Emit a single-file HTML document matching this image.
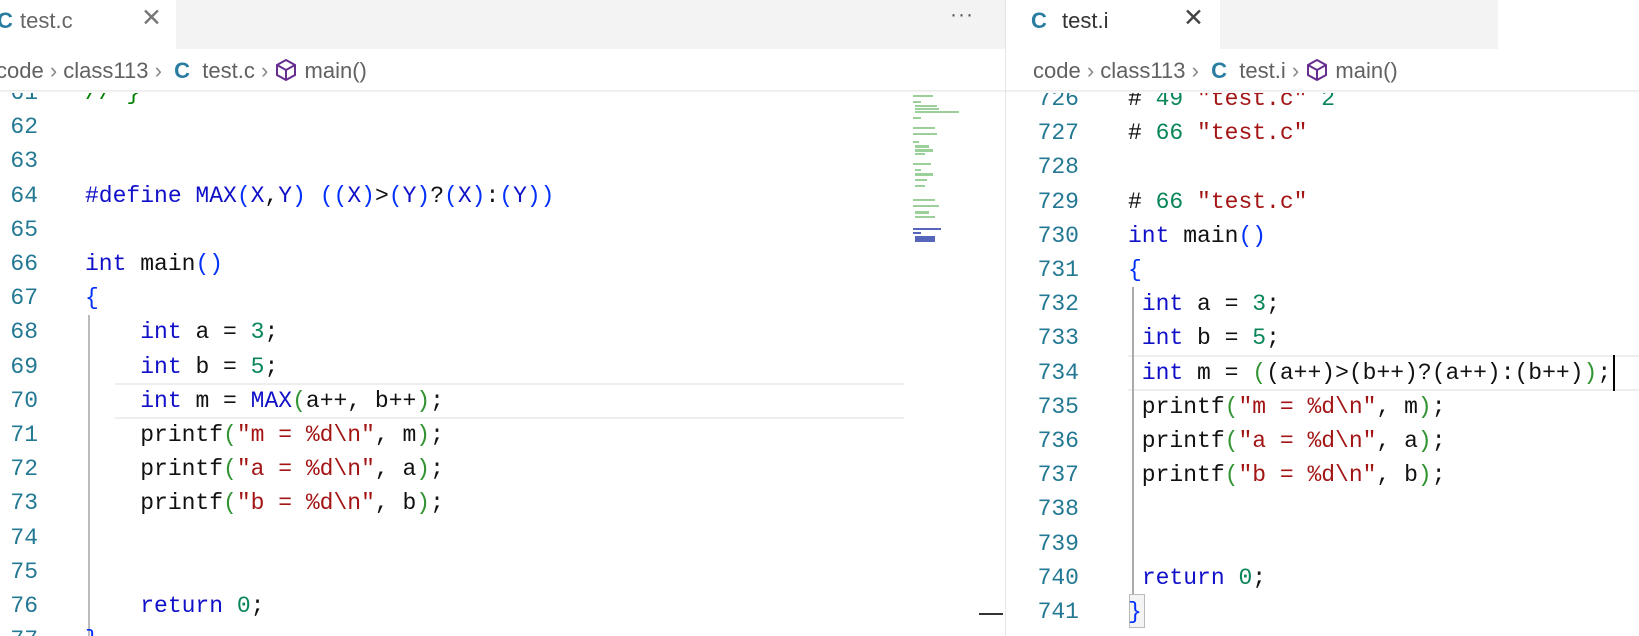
<!DOCTYPE html>
<html><head><meta charset="utf-8"><style>
body{margin:0;width:1639px;height:636px;overflow:hidden;background:#fff;position:relative;font-family:"Liberation Sans",sans-serif}
.abs{position:absolute}
.code{font-family:"Liberation Mono","DejaVu Sans Mono",monospace;font-size:23px;white-space:pre;color:#111;line-height:34.2px;height:34.2px}
.ln{font-family:"Liberation Mono",monospace;font-size:23px;color:#237893;text-align:right;line-height:34.2px;white-space:pre}
.k{color:#1010c8}.n{color:#098658}.s{color:#a31515}.g{color:#319331}.b{color:#0431fa}.c{color:#008000}
.ui{font-size:22px;color:#616161}
</style></head><body>
<!-- tab bars -->
<div class="abs" style="left:0;top:0;width:1005px;height:49px;background:#f3f3f3"></div>
<div class="abs" style="left:0;top:0;width:176px;height:49px;background:#fff"></div>
<div class="abs ui" style="left:-3px;top:8px;color:#2a7da0;font-weight:bold">C</div>
<div class="abs ui" style="left:20px;top:8px;color:#666">test.c</div>
<div class="abs" style="left:141px;top:3px;font-size:25px;color:#777">✕</div>
<div class="abs" style="left:950px;top:3px;font-size:21px;color:#555;letter-spacing:1px">···</div>
<div class="abs" style="left:1005px;top:0;width:1px;height:636px;background:#e5e5e5"></div>
<div class="abs" style="left:1006px;top:0;width:492px;height:49px;background:#f3f3f3"></div>
<div class="abs" style="left:1006px;top:0;width:214px;height:49px;background:#fff"></div>
<div class="abs ui" style="left:1031px;top:8px;color:#2a7da0;font-weight:bold">C</div>
<div class="abs ui" style="left:1062px;top:8px;color:#333">test.i</div>
<div class="abs" style="left:1183px;top:3px;font-size:25px;color:#444">✕</div>
<!-- breadcrumbs -->
<div class="abs ui" style="left:-4px;top:58px;white-space:pre">code <span style="color:#888">›</span> class113 <span style="color:#888">›</span>  <b style="color:#2a7da0">C</b>  test.c <span style="color:#888">›</span> <svg width="24" height="24" viewBox="0 0 24 24" style="vertical-align:-4px"><path d="M12 2L21 7v10l-9 5-9-5V7z M3 7l9 5 9-5 M12 12v10" fill="none" stroke="#652d90" stroke-width="2"/></svg> main()</div>
<div class="abs ui" style="left:1033px;top:58px;white-space:pre">code <span style="color:#888">›</span> class113 <span style="color:#888">›</span>  <b style="color:#2a7da0">C</b>  test.i <span style="color:#888">›</span> <svg width="24" height="24" viewBox="0 0 24 24" style="vertical-align:-4px"><path d="M12 2L21 7v10l-9 5-9-5V7z M3 7l9 5 9-5 M12 12v10" fill="none" stroke="#652d90" stroke-width="2"/></svg> main()</div>
<div class="abs" style="left:0;top:90px;width:1005px;height:3px;background:linear-gradient(#e8e8e8,#fff)"></div>
<div class="abs" style="left:1006px;top:90px;width:633px;height:3px;background:linear-gradient(#e8e8e8,#fff)"></div>

<!-- left editor -->
<div class="abs" style="left:0;top:93px;width:909px;height:543px;overflow:hidden">
 <div class="abs" style="left:115px;top:290px;width:789px;height:32px;border-top:2px solid #eee;border-bottom:2px solid #eee"></div>
 <div class="abs" style="left:88px;top:222px;width:2px;height:340px;background:#bbb"></div>
</div>
<div class="abs" style="left:0;top:93px;width:909px;height:543px;overflow:hidden">
<div class="abs" style="top:-17px;left:0">
<div class="ln abs" style="left:0;width:38px;top:0">61
62
63
64
65
66
67
68
69
70
71
72
73
74
75
76
77</div>
<div class="abs" style="left:85px;top:0">
<div class="code"><span class="c">// }</span></div>
<div class="code"></div>
<div class="code"></div>
<div class="code"><span class="k">#define MAX</span><span class="b">(</span><span class="k">X</span>,<span class="k">Y</span><span class="b">)</span> <span class="b">((</span><span class="k">X</span><span class="b">)</span>&gt;<span class="b">(</span><span class="k">Y</span><span class="b">)</span>?<span class="b">(</span><span class="k">X</span><span class="b">)</span>:<span class="b">(</span><span class="k">Y</span><span class="b">))</span></div>
<div class="code"></div>
<div class="code"><span class="k">int</span> main<span class="b">()</span></div>
<div class="code"><span class="b">{</span></div>
<div class="code">    <span class="k">int</span> a = <span class="n">3</span>;</div>
<div class="code">    <span class="k">int</span> b = <span class="n">5</span>;</div>
<div class="code">    <span class="k">int</span> m = <span class="k">MAX</span><span class="g">(</span>a++, b++<span class="g">)</span>;</div>
<div class="code">    printf<span class="g">(</span><span class="s">"m = %d\n"</span>, m<span class="g">)</span>;</div>
<div class="code">    printf<span class="g">(</span><span class="s">"a = %d\n"</span>, a<span class="g">)</span>;</div>
<div class="code">    printf<span class="g">(</span><span class="s">"b = %d\n"</span>, b<span class="g">)</span>;</div>
<div class="code"></div>
<div class="code"></div>
<div class="code">    <span class="k">return</span> <span class="n">0</span>;</div>
<div class="code"><span class="b">}</span></div>
</div></div></div>
<!-- minimap -->
<svg class="abs" style="left:909px;top:89px" width="62" height="156">
<g fill="#9bd09b">
<rect x="4" y="6" width="20" height="2"/><rect x="4" y="12" width="8" height="2"/><rect x="6" y="16" width="22" height="2"/><rect x="6" y="19" width="24" height="2"/><rect x="6" y="22" width="44" height="2"/><rect x="4" y="28" width="8" height="2"/>
<rect x="4" y="38" width="22" height="2"/><rect x="4" y="44" width="24" height="2"/><rect x="4" y="52" width="6" height="2"/><rect x="6" y="56" width="14" height="3"/><rect x="6" y="60" width="18" height="3"/><rect x="6" y="64" width="10" height="2"/>
<rect x="4" y="74" width="18" height="2"/><rect x="6" y="80" width="6" height="2"/><rect x="6" y="84" width="18" height="3"/><rect x="6" y="90" width="12" height="2"/><rect x="6" y="96" width="10" height="2"/>
<rect x="4" y="110" width="22" height="2"/><rect x="4" y="116" width="26" height="2"/><rect x="6" y="122" width="14" height="3"/><rect x="6" y="127" width="20" height="2"/>
</g><g fill="#5566bb"><rect x="4" y="139" width="28" height="2"/><rect x="4" y="143" width="8" height="2"/><rect x="6" y="147" width="20" height="6"/></g>
</svg>
<div class="abs" style="left:979px;top:613px;width:24px;height:2px;background:#333"></div>

<!-- right editor -->
<div class="abs" style="left:1006px;top:93px;width:633px;height:543px;overflow:hidden">
 <div class="abs" style="left:122px;top:262px;width:520px;height:32px;border-top:2px solid #eee;border-bottom:2px solid #eee"></div>
 <div class="abs" style="left:126px;top:194px;width:2px;height:320px;background:#aaa"></div>
 <div class="abs" style="left:123px;top:501px;width:14px;height:32px;border:1px solid #bbb;background:#f4f4f4"></div>
 <div class="abs" style="left:607px;top:262px;width:2px;height:36px;background:#000"></div>
</div>
<div class="abs" style="left:1006px;top:93px;width:633px;height:543px;overflow:hidden">
<div class="abs" style="top:-11px;left:0">
<div class="ln abs" style="left:0;width:73px;top:0">726
727
728
729
730
731
732
733
734
735
736
737
738
739
740
741
742</div>
<div class="abs" style="left:122px;top:0">
<div class="code"># <span class="n">49</span> <span class="s">"test.c"</span> <span class="n">2</span></div>
<div class="code"># <span class="n">66</span> <span class="s">"test.c"</span></div>
<div class="code"></div>
<div class="code"># <span class="n">66</span> <span class="s">"test.c"</span></div>
<div class="code"><span class="k">int</span> main<span class="b">()</span></div>
<div class="code"><span class="b">{</span></div>
<div class="code"> <span class="k">int</span> a = <span class="n">3</span>;</div>
<div class="code"> <span class="k">int</span> b = <span class="n">5</span>;</div>
<div class="code"> <span class="k">int</span> m = <span class="g">(</span>(a++)&gt;(b++)?(a++):(b++)<span class="g">)</span>;</div>
<div class="code"> printf<span class="g">(</span><span class="s">"m = %d\n"</span>, m<span class="g">)</span>;</div>
<div class="code"> printf<span class="g">(</span><span class="s">"a = %d\n"</span>, a<span class="g">)</span>;</div>
<div class="code"> printf<span class="g">(</span><span class="s">"b = %d\n"</span>, b<span class="g">)</span>;</div>
<div class="code"></div>
<div class="code"></div>
<div class="code"> <span class="k">return</span> <span class="n">0</span>;</div>
<div class="code"><span class="b">}</span></div>
</div></div></div>
</body></html>
